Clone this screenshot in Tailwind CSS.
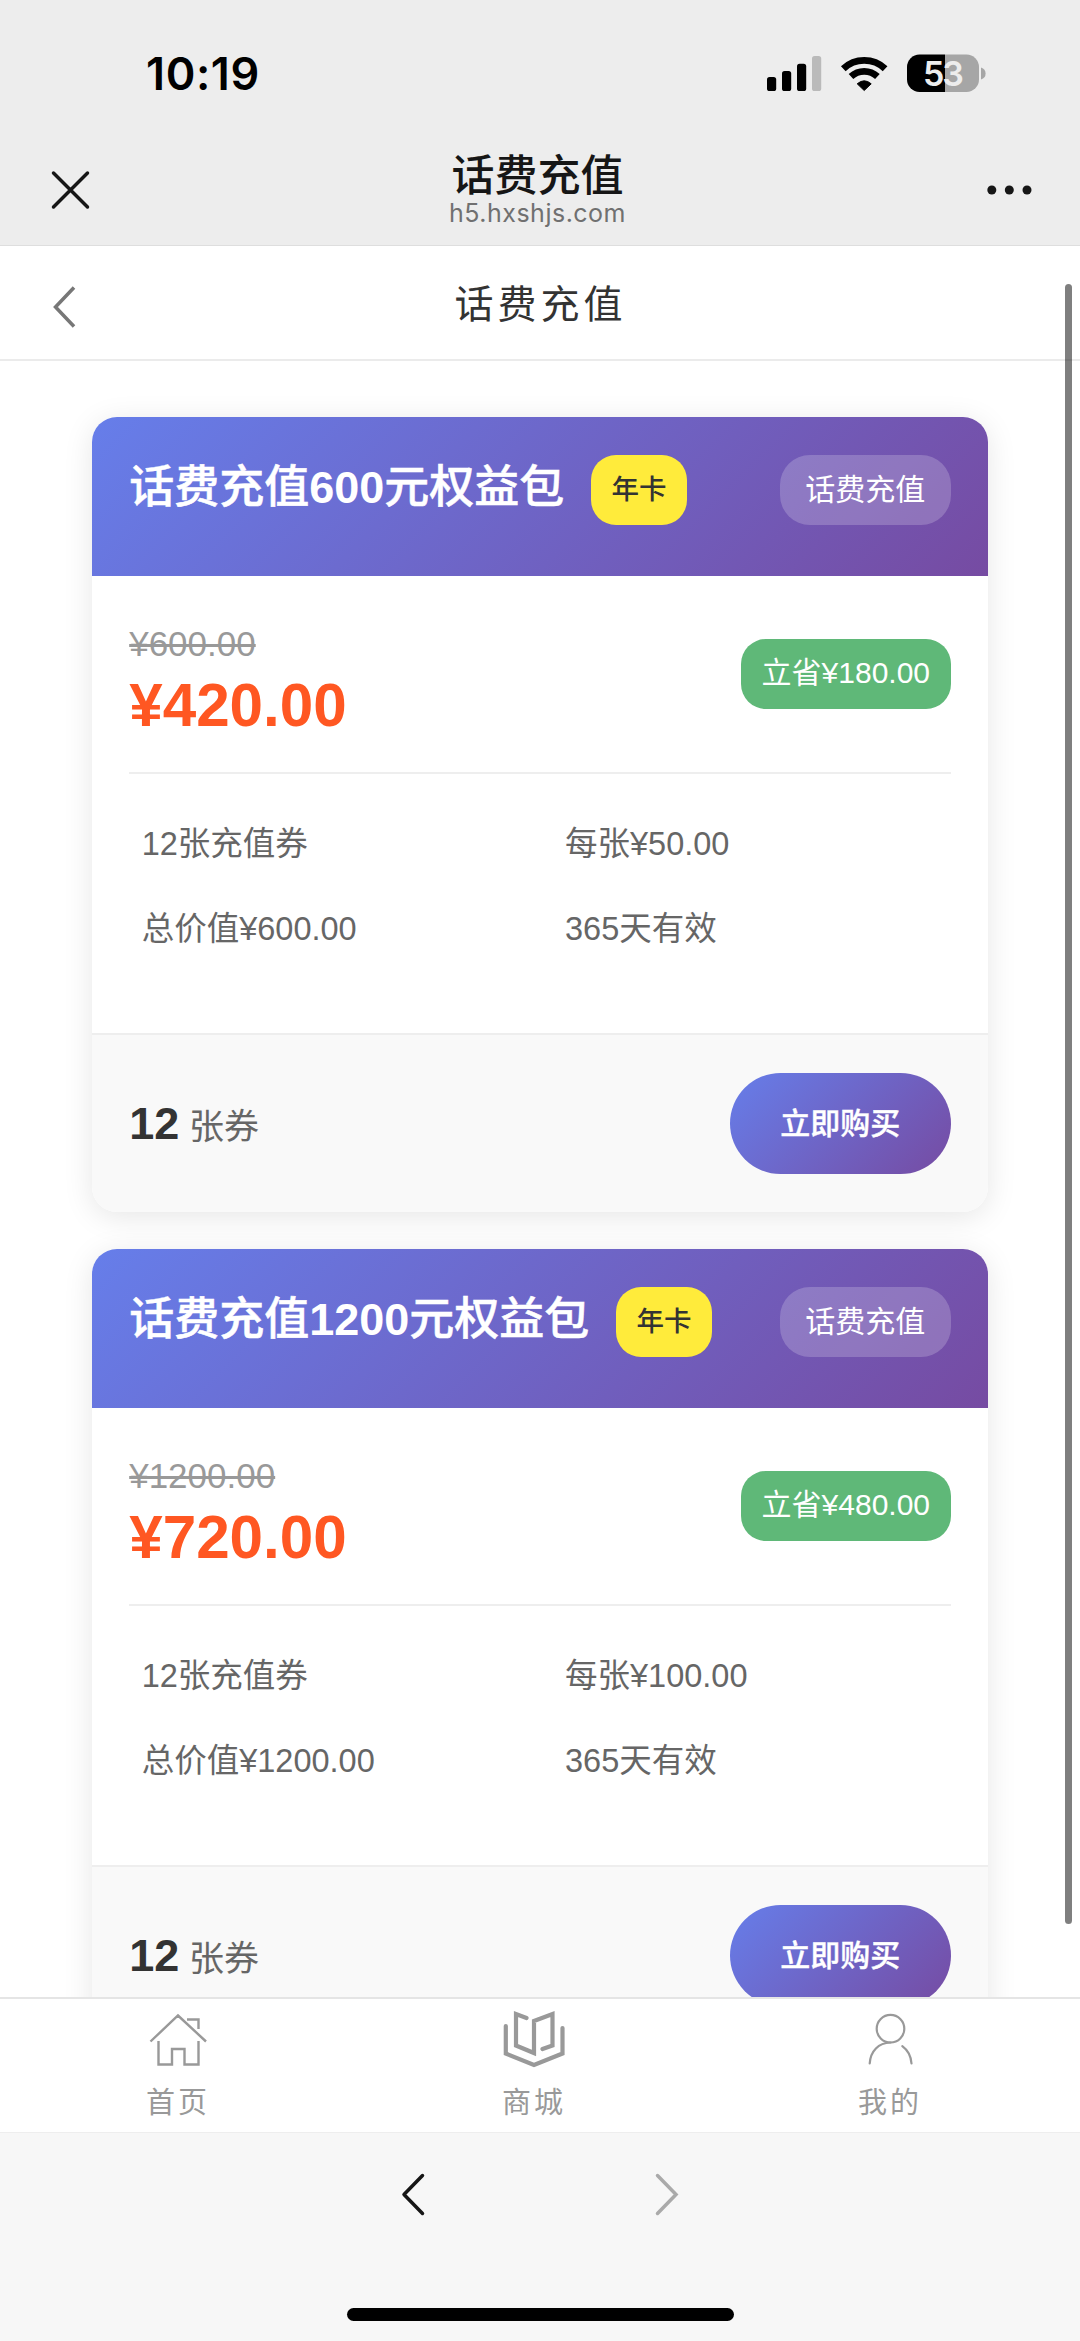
<!DOCTYPE html>
<html lang="zh-CN">
<head>
<meta charset="utf-8">
<title>话费充值</title>
<script src="https://cdn.jsdelivr.net/npm/@tailwindcss/browser@4"></script>
</head>
<body class="relative flex h-[2341px] w-[1080px] flex-col overflow-hidden bg-white font-['Liberation_Sans','Noto_Sans_CJK_SC',sans-serif] text-[#333]">

<!-- Status bar and browser title -->
<header class="h-[246px] shrink-0 border-b border-[#dedede] bg-[#ededed]">
  <div class="flex h-[146px] items-center justify-between pr-[94px] pl-[146px]">
    <div class="font-[Inter,sans-serif] text-[45px] leading-none font-semibold tracking-[0.600px] text-black">10:19</div>
    <svg class="h-[40px] w-[220px]" viewBox="0 0 220 40">
      <g fill="#000">
        <rect x="1" y="24" width="9.2" height="14" rx="2.6"/>
        <rect x="16" y="18" width="9.2" height="20" rx="2.6"/>
        <rect x="31" y="10.700" width="9.2" height="27.3" rx="2.6"/>
        <rect x="46" y="3" width="9.2" height="35" rx="2.6" fill="#bababa"/>
        <path d="M98.200 37.500 L91.200 30.800 Q98.200 24.800 105.200 30.800 Z" stroke="#000" stroke-width="1" stroke-linejoin="round"/>
      </g>
      <g fill="none" stroke="#000" stroke-width="6.800">
        <path d="M77.300 15.700 A30.500 30.500 0 0 1 119.100 15.700"/>
        <path d="M85 23.500 A19.500 19.500 0 0 1 111.400 23.500"/>
      </g>
      <path d="M153.500 1.500 H179 V39 H153.500 A12.500 12.500 0 0 1 141 26.500 V14 A12.500 12.500 0 0 1 153.500 1.500Z" fill="#000"/>
      <path d="M179 1.500 H200.500 A12.500 12.500 0 0 1 213 14 V26.500 A12.500 12.500 0 0 1 200.500 39 H179Z" fill="#a6a6a6"/>
      <path d="M215 14.500 Q219.600 16 219.600 20.500 T215 26.500Z" fill="#a6a6a6"/>
      <text x="177.500" y="32.800" text-anchor="middle" font-family="Inter, sans-serif" font-weight="600" font-size="34" textLength="41" fill="#ededed">53</text>
    </svg>
  </div>
  <div class="flex h-[99px] items-start justify-between pr-[48px] pl-[51px]">
    <svg class="mt-[24px] size-[40px]" viewBox="0 0 40 40" fill="none" stroke="#161616" stroke-width="3.500" stroke-linecap="round"><path d="M2.500 3 L36.500 37 M36.500 3 L2.500 37"/></svg>
    <div class="flex flex-col items-center pr-[2px]">
      <h1 class="mt-[3px] font-['Noto_Sans_CJK_SC',sans-serif] text-[43px] leading-[46px] font-medium text-[#161616]">话费充值</h1>
      <p class="mt-[3px] font-[Inter,sans-serif] text-[25px] leading-[30px] tracking-[0.500px] text-[#707070]">h5.hxshjs.com</p>
    </div>
    <svg class="mt-[34px] h-[20px] w-[46px]" viewBox="0 0 46 20" fill="#161616"><circle cx="5.800" cy="10" r="4.500"/><circle cx="23.300" cy="10" r="4.500"/><circle cx="41" cy="10" r="4.500"/></svg>
  </div>
</header>

<!-- Page navigation -->
<nav class="flex h-[115px] shrink-0 items-center justify-between border-b-2 border-[#ebebeb] px-[52px]">
  <svg class="mt-[8px] h-[42px] w-[24px]" viewBox="0 0 24 42" fill="none" stroke="#777" stroke-width="3.500"><path d="M22 1.500 L3.500 21 L22 40.500"/></svg>
  <h2 class="pt-[4px] pl-[1px] text-[39px] leading-none tracking-[4px]">话费充值</h2>
  <span class="w-[24px]"></span>
</nav>

<main class="flex h-[1636px] shrink-0 flex-col gap-[37px] overflow-hidden px-[91.700px] pt-[56px]">

  <article class="flex h-[795px] shrink-0 flex-col overflow-hidden rounded-[25px] bg-white shadow-[0_5px_30px_rgba(0,0,0,0.1)]">
    <div class="flex h-[159px] items-start justify-between bg-[linear-gradient(135deg,#667eea_0%,#764ba2_100%)] px-[37.500px] pt-[37.500px] text-white">
      <div class="flex items-start">
        <h3 class="pt-[3px] text-[45px] leading-[60px] font-medium [-webkit-text-stroke:0.5px_white]">话费充值<b class="[-webkit-text-stroke:0px]">600</b>元权益包</h3>
        <span class="ml-[27px] flex h-[70.500px] w-[95.500px] items-center justify-center rounded-[25px] bg-[#ffeb3b] text-[27.500px] font-medium text-[#333]">年卡</span>
      </div>
      <span class="flex h-[70.500px] w-[171px] items-center justify-center rounded-[30px] bg-white/20 text-[30px]">话费充值</span>
    </div>
    <div class="flex h-[457px] flex-col px-[37.500px]">
      <div class="flex h-[198px] items-start justify-between border-b-2 border-[#eee]">
        <div class="flex flex-col pt-[48px]">
          <span class="text-[35px] leading-[40px] text-[#999] line-through">¥600.00</span>
          <span class="mt-[7px] text-[60.200px] leading-[70px] font-bold text-[#ff5722]">¥420.00</span>
        </div>
        <span class="mt-[62.500px] flex h-[70.500px] w-[210px] items-center justify-center rounded-[25px] bg-[#5fb878] pb-[2px] text-[30px] text-white">立省¥180.00</span>
      </div>
      <div class="grid grid-cols-2 gap-x-[25px] pt-[28px] text-[32.500px] text-[#666]">
        <span class="flex h-[85px] items-center px-[12.500px]">12张充值券</span>
        <span class="flex h-[85px] items-center px-[12.500px]">每张¥50.00</span>
        <span class="flex h-[85px] items-center px-[12.500px]">总价值¥600.00</span>
        <span class="flex h-[85px] items-center px-[12.500px]">365天有效</span>
      </div>
    </div>
    <div class="flex h-[179px] items-center justify-between border-t-2 border-[#eee] bg-[#f9f9f9] px-[37.500px]">
      <p class="pt-[1px] text-[35px] text-[#666]"><b class="text-[45px] text-[#333]">12</b> 张券</p>
      <button class="h-[100.500px] w-[221px] rounded-full bg-[linear-gradient(135deg,#667eea_0%,#764ba2_100%)] text-[30px] font-medium text-white [-webkit-text-stroke:0.4px_white]">立即购买</button>
    </div>
  </article>

  <article class="flex h-[795px] shrink-0 flex-col overflow-hidden rounded-[25px] bg-white shadow-[0_5px_30px_rgba(0,0,0,0.1)]">
    <div class="flex h-[159px] items-start justify-between bg-[linear-gradient(135deg,#667eea_0%,#764ba2_100%)] px-[37.500px] pt-[37.500px] text-white">
      <div class="flex items-start">
        <h3 class="pt-[3px] text-[45px] leading-[60px] font-medium [-webkit-text-stroke:0.5px_white]">话费充值<b class="[-webkit-text-stroke:0px]">1200</b>元权益包</h3>
        <span class="ml-[27px] flex h-[70.500px] w-[95.500px] items-center justify-center rounded-[25px] bg-[#ffeb3b] text-[27.500px] font-medium text-[#333]">年卡</span>
      </div>
      <span class="flex h-[70.500px] w-[171px] items-center justify-center rounded-[30px] bg-white/20 text-[30px]">话费充值</span>
    </div>
    <div class="flex h-[457px] flex-col px-[37.500px]">
      <div class="flex h-[198px] items-start justify-between border-b-2 border-[#eee]">
        <div class="flex flex-col pt-[48px]">
          <span class="text-[35px] leading-[40px] text-[#999] line-through">¥1200.00</span>
          <span class="mt-[7px] text-[60.200px] leading-[70px] font-bold text-[#ff5722]">¥720.00</span>
        </div>
        <span class="mt-[62.500px] flex h-[70.500px] w-[210px] items-center justify-center rounded-[25px] bg-[#5fb878] pb-[2px] text-[30px] text-white">立省¥480.00</span>
      </div>
      <div class="grid grid-cols-2 gap-x-[25px] pt-[28px] text-[32.500px] text-[#666]">
        <span class="flex h-[85px] items-center px-[12.500px]">12张充值券</span>
        <span class="flex h-[85px] items-center px-[12.500px]">每张¥100.00</span>
        <span class="flex h-[85px] items-center px-[12.500px]">总价值¥1200.00</span>
        <span class="flex h-[85px] items-center px-[12.500px]">365天有效</span>
      </div>
    </div>
    <div class="flex h-[179px] items-center justify-between border-t-2 border-[#eee] bg-[#f9f9f9] px-[37.500px]">
      <p class="pt-[1px] text-[35px] text-[#666]"><b class="text-[45px] text-[#333]">12</b> 张券</p>
      <button class="h-[100.500px] w-[221px] rounded-full bg-[linear-gradient(135deg,#667eea_0%,#764ba2_100%)] text-[30px] font-medium text-white [-webkit-text-stroke:0.4px_white]">立即购买</button>
    </div>
  </article>
</main>

<!-- Tab bar -->
<nav class="flex h-[135px] shrink-0 border-t-2 border-[#e5e5e5] bg-white text-[29px] text-[#999]">
  <a class="flex w-[356px] flex-col items-center pt-[11px]">
    <svg class="h-[60px] w-[64px]" viewBox="146 2010 64 60" fill="none" stroke="#999" stroke-width="2.400"><path d="M150.500 2041.500 L178 2015.500 L206 2041.500 M187 2019.500 H198.500 V2029 M158.500 2041 V2064.500 H172 V2049 H184.500 V2064.500 H198.500 V2041"/></svg>
    <span class="mt-[12px] leading-[42px] tracking-[3px]">首页</span>
  </a>
  <a class="flex w-[356px] flex-col items-center pt-[11px]">
    <svg class="h-[60px] w-[64px]" viewBox="502 2010 64 60" fill="none" stroke="#999" stroke-width="4.200" stroke-linecap="round"><path d="M505.800 2026 V2053.500 L534 2065 L562.500 2053.500 V2028 M526.500 2018 L516 2014 V2045.500 L534 2053 V2021 L552.500 2014 V2045.500 L542.500 2049"/></svg>
    <span class="mt-[12px] leading-[42px] tracking-[3px]">商城</span>
  </a>
  <a class="flex w-[356px] flex-col items-center pt-[11px]">
    <svg class="h-[60px] w-[64px]" viewBox="858 2010 64 60" fill="none" stroke="#999" stroke-width="2.200" stroke-linecap="round"><circle cx="890.500" cy="2028.700" r="13.800"/><path d="M869.700 2063.500 C870.500 2051 878.500 2042.800 890.500 2042.500 M902.300 2046.200 C907.500 2050 911 2056 911.500 2063.500"/></svg>
    <span class="mt-[12px] leading-[42px] tracking-[3px]">我的</span>
  </a>
</nav>

<!-- Browser toolbar -->
<footer class="flex h-[209px] shrink-0 flex-col items-center justify-between border-t border-[#eee] bg-[#f7f7f7] pt-[40px] pb-[20px]">
  <div class="flex w-[278px] justify-between">
    <svg class="h-[43px] w-[24px]" viewBox="0 0 24 43" fill="none" stroke="#161616" stroke-width="3.500" stroke-linecap="round" stroke-linejoin="round"><path d="M21.500 2.500 L3 21.500 L21.500 40.500"/></svg>
    <svg class="h-[43px] w-[24px]" viewBox="0 0 24 43" fill="none" stroke="#aaa" stroke-width="3.500" stroke-linecap="round"><path d="M2.500 2.500 L21 21.500 L2.500 40.500"/></svg>
  </div>
  <div class="h-[13px] w-[387px] rounded-full bg-black"></div>
</footer>

<!-- Scroll indicator over the page -->
<div class="absolute top-[284px] right-[8px] h-[1640px] w-[7.500px] rounded-full bg-black/50"></div>
</body>
</html>
